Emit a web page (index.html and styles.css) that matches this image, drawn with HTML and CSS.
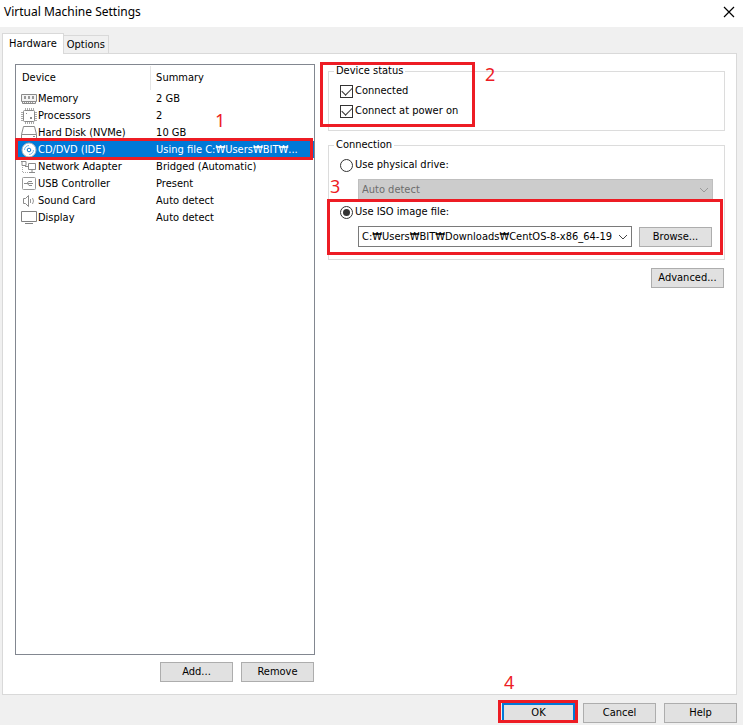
FILE: index.html
```html
<!DOCTYPE html>
<html lang="en">
<head>
<meta charset="utf-8">
<title>Virtual Machine Settings</title>
<link rel="stylesheet" href="styles.css">
</head>
<body>
<header class="titlebar">
  <h1>Virtual Machine Settings</h1>
  <button class="close" type="button" aria-label="Close">
    <svg width="12" height="12" viewBox="0 0 12 12"><path d="M1 1l10 10M11 1L1 11" stroke="#000" stroke-width="1.2" fill="none"/></svg>
  </button>
</header>
<nav class="tabs">
  <button class="tab active" type="button">Hardware</button>
  <button class="tab" type="button">Options</button>
</nav>
<main class="panel">
  <section class="left">
    <div class="list">
      <table class="devices">
        <thead><tr><th>Device</th><th class="split">Summary</th></tr></thead>
        <tbody>
          <tr><td><span class="device"><svg viewBox="0 0 16 16"><path d="M.5 3.500h15v7H.5zM1.500 10.500v2h13v-2" fill="#f4f4f4" stroke="#8a8a8a"/><path d="M3 5h2v3H3zM7 5h2v3H7zM11 5h2v3h-2z" fill="#999"/><path d="M3 11.500h10" stroke="#999" stroke-dasharray="1 1"/></svg>Memory</span></td><td>2 GB</td></tr>
          <tr><td><span class="device"><svg viewBox="0 0 16 16"><path d="M4.500 0v16M6.500 0v16M8.500 0v16M10.500 0v16M12.500 0v16M0 4.500h16M0 6.500h16M0 8.500h16M0 10.500h16M0 12.500h16" stroke="#aaa"/><rect x="2.500" y="2.500" width="11" height="11" rx="1" fill="#fff" stroke="#8a8a8a"/><path d="M5 5h1v1H5zM9 9h2v2H9z" fill="#8a8a8a"/></svg>Processors</span></td><td>2</td></tr>
          <tr><td><span class="device"><svg viewBox="0 0 16 16"><path d="M2.500 1.500h11l2 8v4H.5v-4zM.5 9.500h15" fill="#fff" stroke="#8a8a8a"/><path d="M12 11.500h2" stroke="#8a8a8a"/></svg>Hard Disk (NVMe)</span></td><td>10 GB</td></tr>
          <tr class="selected"><td><span class="device"><svg viewBox="0 0 16 16"><circle cx="8" cy="8" r="7" fill="#fff" stroke="#a8b4c0"/><circle cx="8" cy="8" r="1.800" fill="#fff" stroke="#1676c4"/><path d="M3.500 8A4.500 4.500 0 0 1 8 3.500M12.500 8A4.500 4.500 0 0 1 8 12.500" fill="none" stroke="#7db8e4"/></svg>CD/DVD (IDE)</span></td><td>Using file C:₩Users₩BIT₩...<span class="mark mark-row"></span><span class="step step-1">1</span></td></tr>
          <tr><td><span class="device"><svg viewBox="0 0 16 16"><path d="M7.500 4.500h7v6h-7zM11 10.500v3M8 13.500h6M4 7.500h3" fill="#fff" stroke="#8a8a8a"/><path d="M0 2.500h5v4h-4V3" fill="none" stroke="#8a8a8a"/><path d="M1.500 8v6M2 13.500h6" stroke="#aaa" stroke-dasharray="1 1"/></svg>Network Adapter</span></td><td>Bridged (Automatic)</td></tr>
          <tr><td><span class="device"><svg viewBox="0 0 16 16"><rect x="1.500" y="1.500" width="13" height="12" rx="1" fill="#fff" stroke="#999"/><path d="M4 7.500h8M6 7.500l1.500-2H9M6.500 7.500l1.500 2h1.500" fill="none" stroke="#8a8a8a"/><path d="M3 7h2v1H3zM9 5h2v1H9zM9 9h2v1H9z" fill="#8a8a8a"/></svg>USB Controller</span></td><td>Present</td></tr>
          <tr><td><span class="device"><svg viewBox="0 0 16 16"><path d="M2.500 5.500h2l3-3v11l-3-3h-2z" fill="#fff" stroke="#8a8a8a"/><path d="M9.500 6v4M11.500 5q2 3 0 6" fill="none" stroke="#999"/></svg>Sound Card</span></td><td>Auto detect</td></tr>
          <tr><td><span class="device"><svg viewBox="0 0 16 16"><path d="M.5 1.500h15v10H.5zM4 13.500h8" fill="#fff" stroke="#808080"/></svg>Display</span></td><td>Auto detect</td></tr>
        </tbody>
      </table>
    </div>
    <div class="actions">
      <button class="btn" type="button">Add...</button>
      <button class="btn" type="button">Remove</button>
    </div>
  </section>
  <section class="right">
    <fieldset class="group status">
      <legend>Device status</legend>
      <label class="option"><input type="checkbox" checked>Connected</label>
      <label class="option"><input type="checkbox" checked>Connect at power on</label>
      <span class="mark mark-status"></span><span class="step step-2">2</span>
    </fieldset>
    <fieldset class="group connection">
      <legend>Connection</legend>
      <label class="option"><input type="radio" name="source">Use physical drive:</label>
      <div class="source">
        <div class="combo disabled">
          <select aria-label="Physical drive" disabled><option>Auto detect</option></select>
          <svg width="10" height="6" viewBox="0 0 10 6"><path d="M1 1l4 4 4-4" fill="none" stroke="#999"/></svg>
        </div>
      </div>
      <label class="option iso"><input type="radio" name="source" checked>Use ISO image file:</label>
      <div class="source">
        <div class="combo">
          <select aria-label="ISO image file"><option>C:₩Users₩BIT₩Downloads₩CentOS-8-x86_64-19</option></select>
          <svg width="10" height="6" viewBox="0 0 10 6"><path d="M1 1l4 4 4-4" fill="none" stroke="#444"/></svg>
        </div>
        <button class="btn" type="button">Browse...</button>
      </div>
      <span class="mark mark-iso"></span><span class="step step-3">3</span>
    </fieldset>
    <button class="btn advanced" type="button">Advanced...</button>
  </section>
</main>
<footer class="footer">
  <div class="confirm"><button class="btn primary" type="button">OK</button><span class="mark mark-ok"></span><span class="step step-4">4</span></div>
  <button class="btn" type="button">Cancel</button>
  <button class="btn" type="button">Help</button>
</footer>
</body>
</html>
```
FILE: styles.css
```css
* { box-sizing: border-box; }
body {
  margin: 0;
  min-height: 100vh;
  display: flex;
  flex-direction: column;
  background: #f0f0f0;
  color: #000;
  font: 11px/14px "DejaVu Sans Condensed", "Noto Sans", "Noto Sans CJK KR", sans-serif;
}
button, select, input { font: inherit; color: inherit; }
.titlebar {
  display: flex;
  justify-content: space-between;
  align-items: center;
  height: 27px;
  padding: 0 8px 4px 4px;
  background: #fff;
}
h1 { margin: 0; font: 12px/16px "Noto Sans", sans-serif; }
.close { display: flex; padding: 0; border: 0; background: none; }
.tabs { display: flex; align-items: flex-end; padding: 6px 2px 0; }
.tab {
  height: 18px;
  padding: 0 3px;
  border: 1px solid #d9d9d9;
  border-width: 1px 1px 0 0;
  background: #f0f0f0;
}
.tab.active {
  position: relative;
  height: 21px;
  margin-bottom: -1px;
  padding: 0 6px;
  border-left-width: 1px;
  background: #fff;
}
.panel {
  flex: 1;
  display: grid;
  grid-template-columns: 300fr 397fr;
  gap: 13px;
  margin: 0 6px 0 2px;
  padding: 10px 11px 12px 12px;
  border: 1px solid #d9d9d9;
  background: #fff;
}
.left { display: flex; flex-direction: column; min-width: 0; }
.list { flex: 1; border: 1px solid #828790; }
.devices { width: 100%; table-layout: fixed; border-collapse: collapse; }
.devices th { height: 25px; padding: 1px 6px 0; font-weight: 400; text-align: left; }
.devices th:first-child { width: 45%; }
.devices th.split {
  background: linear-gradient(#e5e5e5, #e5e5e5) left 0 top 1px / 1px 24px no-repeat;
}
.devices td { height: 17px; padding: 0 0 0 6px; white-space: nowrap; }
.devices td:first-child { padding-left: 5px; }
.devices .selected { position: relative; background: #0078d7; color: #fff; }
.device { display: flex; align-items: center; gap: 1px; }
.device svg { width: 16px; height: 16px; flex: none; }
.actions { display: flex; justify-content: flex-end; gap: 8px; padding: 7px 1px 0; }
.btn {
  width: 73px;
  height: 20px;
  padding: 0;
  border: 1px solid #adadad;
  background: #e1e1e1;
  text-align: center;
}
.right { display: flex; flex-direction: column; min-width: 0; }
.group {
  position: relative;
  min-width: 0;
  margin: 0 0 7px;
  padding: 3px 11px 9px;
  border: 1px solid #dcdcdc;
}
.group.connection { padding-bottom: 12px; margin-bottom: 8px; }
.group legend { margin-left: -6px; padding: 0 2px; }
.option { display: flex; align-items: center; gap: 2px; height: 20px; }
.option input {
  appearance: none;
  display: grid;
  place-content: center;
  width: 13px;
  height: 13px;
  margin: 0;
  border: 1px solid #333;
  background: #fff;
}
.option input[type="radio"] { border-radius: 50%; }
.option input[type="radio"]:checked::before {
  content: "";
  width: 7px;
  height: 7px;
  border-radius: 50%;
  background: #333;
}
.option input[type="checkbox"]:checked::before {
  content: "";
  width: 9px;
  height: 5px;
  border: solid #333;
  border-width: 0 0 1px 1px;
  transform: translateY(-1px) rotate(-45deg);
}
.option.iso { margin-top: 2px; }
.source { display: flex; align-items: center; gap: 7px; margin-top: 4px; padding-left: 18px; }
.combo { position: relative; flex: 1; min-width: 0; height: 21px; }
.combo select {
  appearance: none;
  width: 100%;
  height: 100%;
  padding: 0 19px 0 3px;
  border: 1px solid #7a7a7a;
  border-radius: 0;
  background: #fff;
}
.combo.disabled select { border-color: #bfbfbf; background: #ccc; color: #6d6d6d; opacity: 1; }
.combo svg { position: absolute; right: 4px; top: 8px; pointer-events: none; }
.source .btn { margin-right: 1px; }
.advanced { align-self: flex-end; margin-right: 1px; }
.footer { display: flex; justify-content: flex-end; gap: 8px; height: 30px; padding: 8px 6px 0; }
.confirm { position: relative; }
.btn.primary { border: 2px solid #0078d7; }
.mark { position: absolute; border: 3px solid #ed1c24; pointer-events: none; }
.mark-row { inset: -3px 1px -2px -1px; }
.mark-status { left: -9px; top: -16px; width: 155px; height: 65px; }
.mark-iso { inset: 47px 1px 4px -2px; }
.mark-ok { inset: -3px -3px 2px -4px; }
.step { position: absolute; color: #ed1c24; font: 18px/20px "Noto Sans", sans-serif; }
.step-1 { left: 199px; top: -31px; }
.step-2 { left: 156px; top: -14px; }
.step-3 { left: 1px; top: 24px; }
.step-4 { left: 2px; top: -31px; }
```
